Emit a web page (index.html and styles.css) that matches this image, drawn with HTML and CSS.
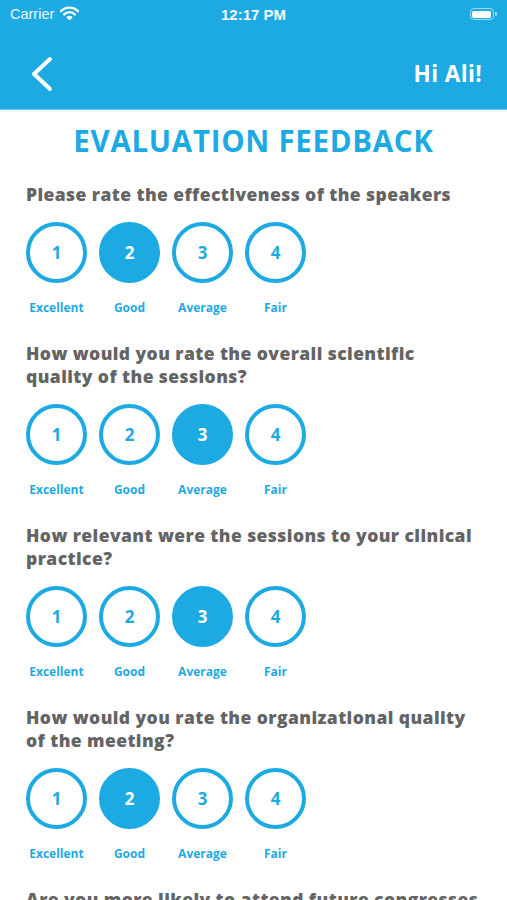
FILE: index.html
```html
<!DOCTYPE html>
<html>
<head>
<meta charset="utf-8">
<link rel="stylesheet" href="styles.css">
</head>
<body>
<header class="header">
  <div class="status">
    <div class="status-left">
      <span class="carrier">Carrier</span>
      <svg class="wifi" width="19" height="14" viewBox="0 0 19 14">
        <path d="M1 5.2 A12 12 0 0 1 18 5.2" fill="none" stroke="#fff" stroke-width="2.4" stroke-linecap="round"/>
        <path d="M4.2 8.4 A7.4 7.4 0 0 1 14.8 8.4" fill="none" stroke="#fff" stroke-width="2.4" stroke-linecap="round"/>
        <path d="M7.3 11.3 A3 3 0 0 1 11.7 11.3 L9.5 13.6 Z" fill="#fff" stroke="#fff" stroke-width="1.4" stroke-linejoin="round"/>
      </svg>
    </div>
    <div class="time">12:17 PM</div>
    <div class="status-right">
      <div class="battery"><div class="battery-fill"></div></div>
      <div class="battery-nub"></div>
    </div>
  </div>
  <div class="nav">
    <svg class="back" width="24" height="36" viewBox="0 0 24 36">
      <path d="M20 3 L4 18 L20 33" fill="none" stroke="#fff" stroke-width="4" stroke-linecap="round" stroke-linejoin="round"/>
    </svg>
    <div class="greet">Hi Ali!</div>
  </div>
</header>

<main class="content">
  <h1 class="title">EVALUATION FEEDBACK</h1>

  <section class="question">
    <p class="q-text">Please rate the effectiveness of the speakers</p>
    <div class="options">
      <div class="opt"><div class="circle">1</div><div class="label">Excellent</div></div>
      <div class="opt"><div class="circle on">2</div><div class="label">Good</div></div>
      <div class="opt"><div class="circle">3</div><div class="label">Average</div></div>
      <div class="opt"><div class="circle">4</div><div class="label">Fair</div></div>
    </div>
  </section>

  <section class="question">
    <p class="q-text">How would you rate the overall scientific quality of the sessions?</p>
    <div class="options">
      <div class="opt"><div class="circle">1</div><div class="label">Excellent</div></div>
      <div class="opt"><div class="circle">2</div><div class="label">Good</div></div>
      <div class="opt"><div class="circle on">3</div><div class="label">Average</div></div>
      <div class="opt"><div class="circle">4</div><div class="label">Fair</div></div>
    </div>
  </section>

  <section class="question">
    <p class="q-text">How relevant were the sessions to your clinical practice?</p>
    <div class="options">
      <div class="opt"><div class="circle">1</div><div class="label">Excellent</div></div>
      <div class="opt"><div class="circle">2</div><div class="label">Good</div></div>
      <div class="opt"><div class="circle on">3</div><div class="label">Average</div></div>
      <div class="opt"><div class="circle">4</div><div class="label">Fair</div></div>
    </div>
  </section>

  <section class="question">
    <p class="q-text">How would you rate the organizational quality of the meeting?</p>
    <div class="options">
      <div class="opt"><div class="circle">1</div><div class="label">Excellent</div></div>
      <div class="opt"><div class="circle on">2</div><div class="label">Good</div></div>
      <div class="opt"><div class="circle">3</div><div class="label">Average</div></div>
      <div class="opt"><div class="circle">4</div><div class="label">Fair</div></div>
    </div>
  </section>

  <section class="question">
    <p class="q-text">Are you more likely to attend future congresses organized by us?</p>
  </section>
</main>
</body>
</html>
```
FILE: styles.css
```css
* { box-sizing: border-box; }
html, body { margin: 0; padding: 0; }
body {
  width: 507px;
  height: 900px;
  overflow: hidden;
  background: #fff;
  font-family: "Open Sans", "DejaVu Sans", sans-serif;
}
.header {
  background: #1DAAE2;
  height: 110px;
  border-bottom: 1px solid #6cc9ee;
}
.status {
  height: 28px;
  display: flex;
  align-items: center;
  justify-content: space-between;
  padding: 0 10px 0 10px;
  color: #fff;
}
.status-left { display: flex; align-items: center; gap: 6px; width: 120px; }
.carrier {
  font-family: "Liberation Sans", Arial, sans-serif;
  font-size: 14.5px;
  color: #eaf6fc;
}
.wifi { margin-top: -2px; }
.time {
  font-family: "Liberation Sans", Arial, sans-serif;
  font-weight: 700;
  font-size: 15px;
  color: #f3fafd;
}
.status-right { display: flex; align-items: center; justify-content: flex-end; width: 120px; }
.battery {
  width: 24px;
  height: 12px;
  border: 1.5px solid rgba(255,255,255,0.55);
  border-radius: 4px;
  padding: 1.5px;
}
.battery-fill { width: 100%; height: 100%; background: #fff; border-radius: 2px; }
.battery-nub { width: 2px; height: 4px; background: rgba(255,255,255,0.55); border-radius: 0 1px 1px 0; margin-left: 1px; }
.nav {
  height: 81px;
  display: flex;
  align-items: center;
  justify-content: space-between;
  padding: 10px 25px 0 30px;
}
.back { display: block; }
.greet {
  color: #fff;
  font-weight: 700;
  font-size: 22.5px;
  letter-spacing: 0.4px;
}
.content {
  padding: 0 0 0 26px;
}
.title {
  margin: 13px 0 0 -26px;
  text-align: center;
  color: #1DAAE2;
  font-weight: 700;
  font-size: 29.5px;
  line-height: 36px;
  letter-spacing: 0.7px;
}
.question { margin-top: 24px; }
.question + .question { margin-top: 26px; }
.q-text {
  margin: 0;
  color: #646464;
  font-weight: 800;
  font-size: 17.5px;
  line-height: 23px;
  letter-spacing: 0.42px;
  padding-right: 26px;
}
.options {
  display: flex;
  gap: 12px;
  margin-top: 16px;
}
.opt {
  width: 61px;
  display: flex;
  flex-direction: column;
  align-items: center;
}
.circle {
  width: 61px;
  height: 61px;
  border-radius: 50%;
  border: 4px solid #1DAAE2;
  color: #1DAAE2;
  display: flex;
  align-items: center;
  justify-content: center;
  font-weight: 700;
  font-size: 17px;
}
.circle.on {
  background: #1DAAE2;
  color: #fff;
}
.label {
  margin-top: 16px;
  white-space: nowrap;
  color: #1DAAE2;
  font-weight: 700;
  font-size: 12px;
  line-height: 17px;
}
```
